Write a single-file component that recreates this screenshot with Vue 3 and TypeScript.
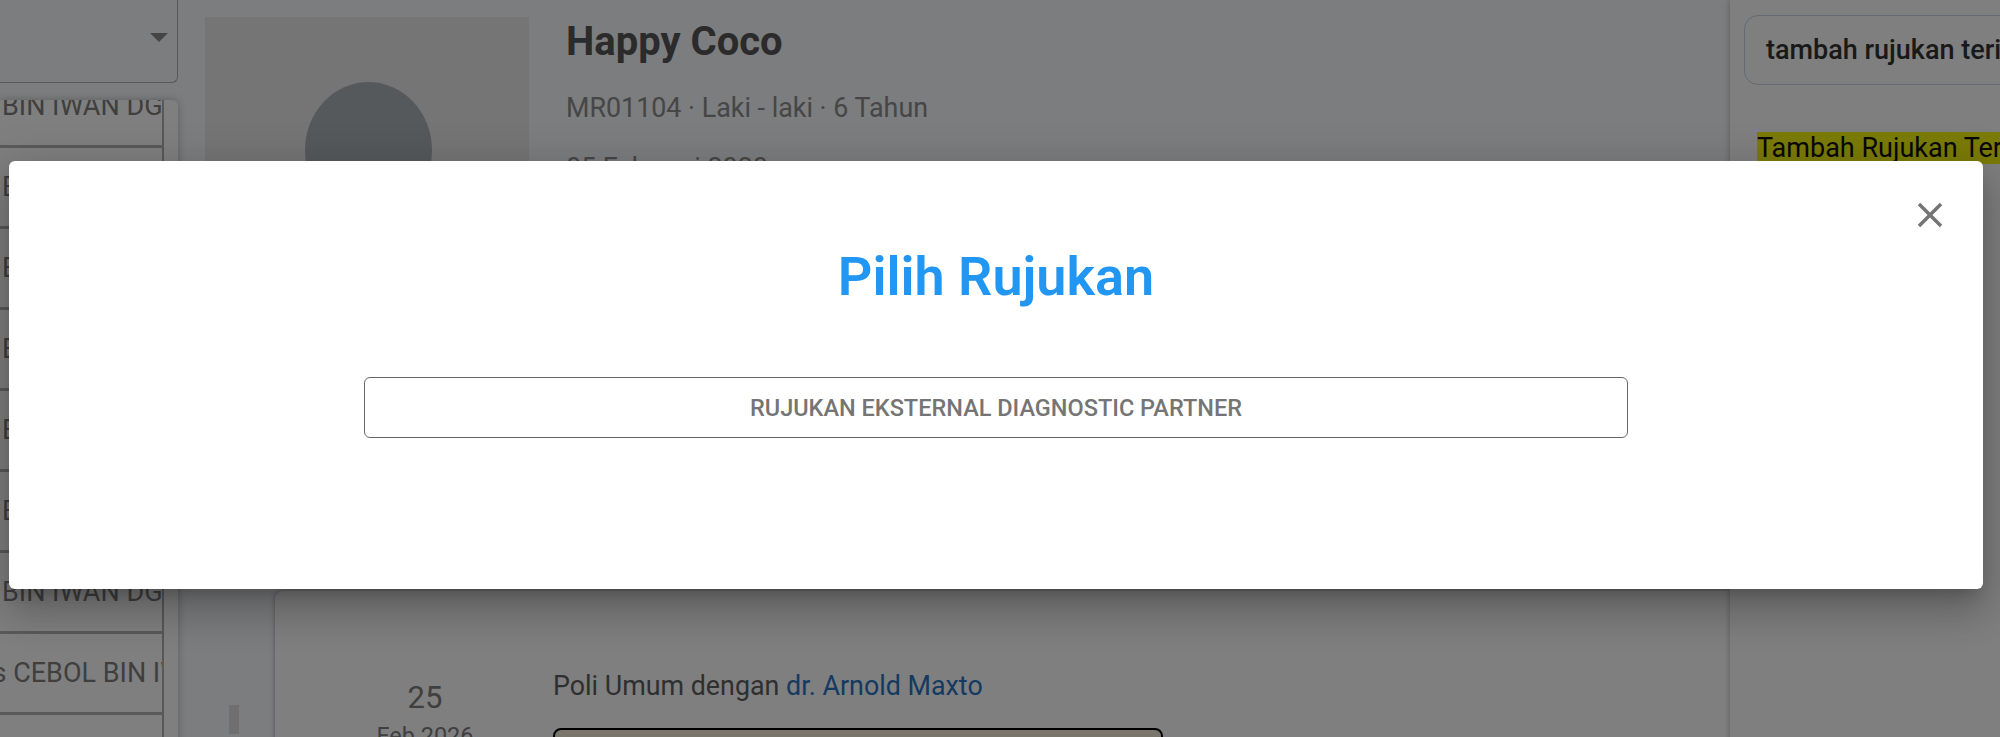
<script setup lang="ts">
const rows: string[] = [
  'BIN IWAN DG',
  'BIN IWAN DG',
  'BIN IWAN DG',
  'BIN IWAN DG',
  'BIN IWAN DG',
  'BIN IWAN DG',
  'BIN IWAN DG',
  'Bagus CEBOL BIN IWAN DG',
  'BIN IWAN DG',
]
</script>

<template>
  <div class="page">
    <aside class="left">
      <div class="select">
        <span class="select__arrow" />
      </div>
      <div class="list">
        <div class="list__inner">
          <div
            v-for="(row, i) in rows"
            :key="i"
            class="list__row"
            :class="{ 'list__row--shift': row.startsWith('Bagus') }"
          >
            <span>{{ row }}</span>
          </div>
        </div>
      </div>
    </aside>

    <main class="middle">
      <section class="patient">
        <div class="avatar">
          <div class="avatar__head" />
        </div>
        <div class="patient__info">
          <h1 class="patient__name">Happy Coco</h1>
          <p class="patient__meta">MR01104 · Laki - laki · 6 Tahun</p>
          <p class="patient__meta patient__meta--date">05 Februari 2020</p>
        </div>
      </section>

      <section class="history">
        <div class="rail">
          <span class="rail__thumb" />
        </div>
        <div class="card">
          <div class="visit">
            <div class="visit__date">
              <div class="visit__day">25</div>
              <div class="visit__month">Feb 2026</div>
            </div>
            <div class="visit__body">
              <div class="visit__title">
                Poli Umum dengan <a class="visit__doctor">dr. Arnold Maxto</a>
              </div>
              <div class="visit__box" />
            </div>
          </div>
        </div>
      </section>
    </main>

    <aside class="right">
      <div class="search">tambah rujukan terintegrasi</div>
      <div class="result"><mark class="result__mark">Tambah Rujukan Terintegrasi</mark></div>
    </aside>

    <div class="overlay">
      <div class="modal">
        <button class="modal__close" type="button" aria-label="Tutup">
          <svg viewBox="0 0 24 24" width="42" height="42">
            <path d="M19 6.41 17.59 5 12 10.59 6.41 5 5 6.41 10.59 12 5 17.59 6.41 19 12 13.41 17.59 19 19 17.59 13.41 12z" />
          </svg>
        </button>
        <h2 class="modal__title">Pilih Rujukan</h2>
        <button class="modal__option" type="button">Rujukan Eksternal Diagnostic Partner</button>
      </div>
    </div>
  </div>
</template>

<style>
html,
body {
  margin: 0;
  overflow: hidden;
}
</style>

<style scoped>
.page {
  position: relative;
  display: grid;
  grid-template-columns: 178px 1552px 270px;
  width: 2000px;
  height: 737px;
  overflow: hidden;
  background: #f8fafe;
  font-family: Roboto, "Liberation Sans", sans-serif;
}

.left {
  display: flex;
  flex-direction: column;
  gap: 17px;
  min-width: 0;
}

.select {
  position: relative;
  height: 83px;
  box-sizing: border-box;
  border: 1px solid #b0b0b0;
  border-top: 0;
  border-left: 0;
  border-radius: 0 0 6px 0;
}

.select__arrow {
  position: absolute;
  right: 9px;
  top: 33px;
  border-left: 9px solid transparent;
  border-right: 9px solid transparent;
  border-top: 9px solid #8a8a8a;
}

.list {
  flex: 1;
  min-height: 0;
  overflow: hidden;
  padding-right: 14px;
  background: #fff;
  box-shadow: 0 0 8px rgba(0, 0, 0, 0.25);
  border-radius: 0 6px 0 0;
}

.list__inner {
  margin-top: -33px;
  border-right: 2px solid #b0b0b0;
  box-sizing: border-box;
}

.list__row {
  display: flex;
  align-items: center;
  height: 81px;
  box-sizing: border-box;
  padding-left: 2px;
  border-bottom: 3px solid #b4b4b4;
  overflow: hidden;
  font-size: 27px;
  color: #7e7e7e;
  white-space: nowrap;
}

.list__row--shift span {
  margin-left: -71px;
}

.middle {
  display: flex;
  flex-direction: column;
  min-width: 0;
}

.patient {
  display: flex;
  gap: 37px;
  height: 591px;
  box-sizing: border-box;
  padding: 17px 0 0 27px;
}

.avatar {
  display: flex;
  justify-content: center;
  width: 324px;
  height: 324px;
  padding: 65px 0 0 2px;
  box-sizing: border-box;
  background: #eaeaea;
}

.avatar__head {
  width: 127px;
  height: 136px;
  border-radius: 50%;
  background: #acb2b6;
}

.patient__name {
  margin: 0;
  padding-top: 2px;
  font-size: 40px;
  line-height: 46px;
  font-weight: 700;
  color: #565656;
}

.patient__meta {
  margin: 26px 0 0;
  font-size: 26.85px;
  line-height: 34px;
  color: #8c8c8c;
}

.patient__meta--date {
  margin-top: 26px;
}

.history {
  flex: 1;
  display: flex;
  min-height: 0;
}

.rail {
  position: relative;
  width: 97px;
  flex-shrink: 0;
}

.rail__thumb {
  position: absolute;
  left: 51px;
  top: 114px;
  width: 10px;
  height: 29px;
  background: #e2dde0;
}

.card {
  flex: 1;
  background: #fff;
  border-radius: 8px 0 0 0;
  box-shadow: 0 0 5px rgba(0, 0, 0, 0.35);
}

.visit {
  display: flex;
  padding-top: 78px;
}

.visit__date {
  width: 256px;
  margin-left: 22px;
  padding-top: 10px;
  text-align: center;
  color: #7e7e7e;
}

.visit__day {
  font-size: 31px;
  line-height: 38px;
}

.visit__month {
  font-size: 23.5px;
  line-height: 38px;
}

.visit__title {
  font-size: 26.85px;
  line-height: 32px;
  color: #5e5e5e;
  margin-top: 1px;
}

.visit__doctor {
  color: #2a74c4;
}

.visit__box {
  width: 610px;
  height: 60px;
  margin-top: 26px;
  box-sizing: border-box;
  border: 2px solid #000;
  border-radius: 8px;
  background: #f6ecd9;
}

.right {
  min-width: 0;
  overflow: hidden;
  padding: 15px 0 0 14px;
  background: #fff;
  box-shadow: 0 0 6px rgba(0, 0, 0, 0.3);
}

.search {
  width: 400px;
  height: 70px;
  box-sizing: border-box;
  padding-left: 21px;
  border: 1px solid #c8d4e0;
  border-radius: 14px;
  font-size: 27px;
  font-weight: 500;
  line-height: 68px;
  color: #333;
  white-space: nowrap;
}

.result {
  margin: 47px 0 0 13px;
  font-size: 27px;
  line-height: 32px;
  white-space: nowrap;
}

.result__mark {
  background: #f6f610;
  color: #111;
}

.overlay {
  position: absolute;
  inset: 0;
  padding: 161px 17px 0 9px;
  background: rgba(0, 0, 0, 0.5);
}

.modal {
  position: relative;
  display: flex;
  flex-direction: column;
  align-items: center;
  height: 428px;
  box-sizing: border-box;
  padding-top: 86px;
  background: #fff;
  border-radius: 6px;
  box-shadow:
    0 11px 15px -7px rgba(0, 0, 0, 0.2),
    0 24px 38px 3px rgba(0, 0, 0, 0.14),
    0 9px 46px 8px rgba(0, 0, 0, 0.12);
}

.modal__close {
  position: absolute;
  top: 33px;
  right: 32px;
  display: flex;
  padding: 0;
  border: 0;
  background: none;
  fill: #757575;
}

.modal__title {
  margin: 0;
  font-size: 54px;
  line-height: 60px;
  font-weight: 600;
  color: #2196f3;
}

.modal__option {
  width: 1264px;
  height: 61px;
  margin-top: 70px;
  padding: 0;
  border: 1px solid #666;
  border-radius: 6px;
  background: #fff;
  font-family: inherit;
  font-size: 23.5px;
  font-weight: 500;
  text-transform: uppercase;
  color: #757575;
}
</style>
